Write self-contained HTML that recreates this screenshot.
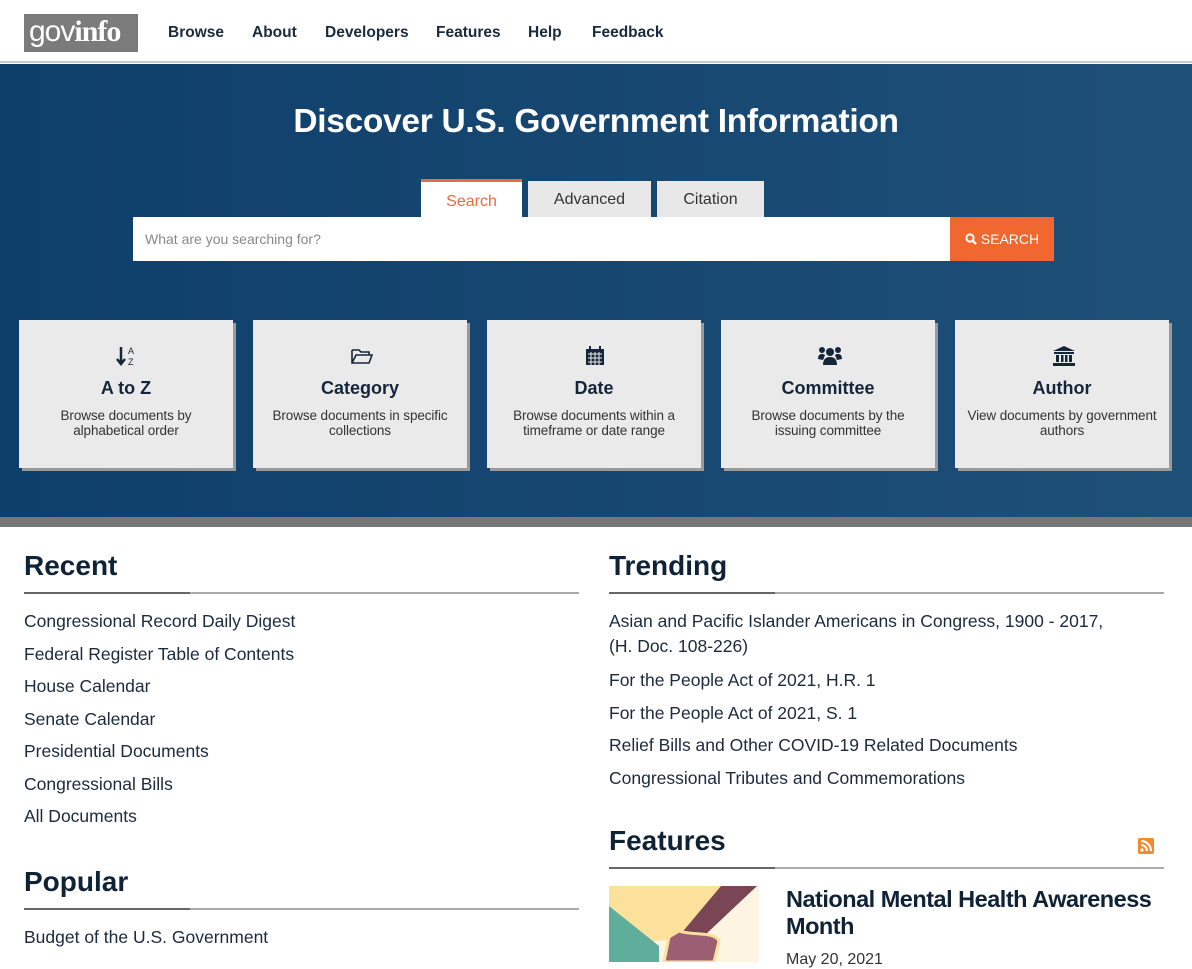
<!DOCTYPE html>
<html><head><meta charset="utf-8"><style>
*{box-sizing:border-box;margin:0;padding:0}
body{width:1192px;height:962px;overflow:hidden;font-family:"Liberation Sans",sans-serif;background:#fff;color:#1b2a3c}
.nav{height:63px;border-bottom:2px solid #c5ccd3;position:relative}
.logo{position:absolute;left:24px;top:14px;width:114px;height:38px;background:#7b7b7b;color:#fff;font-size:30px;line-height:36px;padding-left:5px;letter-spacing:-1px}
.logo b{font-family:"Liberation Serif",serif;font-weight:bold}
.nav a{position:absolute;top:24px;font-size:15.5px;font-weight:bold;color:#1b2a3c}
.hero{position:absolute;top:64px;left:0;width:1192px;height:453px;background:linear-gradient(90deg,#0e3e6a,#1f5078)}
.bar{position:absolute;top:517px;left:0;width:1192px;height:10px;background:#777}
h1{position:absolute;top:103px;width:100%;text-align:center;color:#fff;font-size:33.5px;font-weight:bold;letter-spacing:-0.3px}
.tab{position:absolute;top:181px;height:36px;background:#e8e8e8;font-size:16px;text-align:center;line-height:38px;color:#333}
.tab.on{background:#fff;color:#e86b42;border-top:3px solid #e86b42;top:179px;height:38px;line-height:40px}
.inp{position:absolute;left:133px;top:217px;width:817px;height:44px;background:#fff;color:#888;font-size:14px;line-height:44px;padding-left:12px}
.btn{position:absolute;left:950px;top:217px;width:104px;height:44px;background:#f0682f;color:#fff;font-size:14px;line-height:44px;text-align:center}
.card{position:absolute;top:320px;width:214px;height:148px;background:#eaeaea;box-shadow:3px 3px 0 #9a9a9a;text-align:center;color:#1b2a3c}
.card svg{position:absolute;left:97px;top:25px}
.card h3{position:absolute;top:58px;width:100%;font-size:18px;font-weight:bold;color:#16263a}
.card p{position:absolute;top:88px;width:100%;font-size:13.5px;line-height:15px;color:#333;padding:0 8px;letter-spacing:-0.1px}
.sec{position:absolute;width:555px}
.sec h2{font-size:28px;font-weight:bold;color:#0f2236;height:44px;padding-top:2px}
.sec .ul{height:2px;background:#aaa;position:relative;margin-bottom:11px}
.sec .ul:before{content:"";position:absolute;left:0;top:0;width:166px;height:2px;background:#666}
.sec a{display:block;font-size:17.5px;line-height:32.5px;color:#1b2a3c}
</style></head><body>
<div class="nav">
<div class="logo">gov<b>info</b></div>
<a style="left:168px">Browse</a><a style="left:252px">About</a><a style="left:325px">Developers</a><a style="left:436px">Features</a><a style="left:528px">Help</a><a style="left:592px">Feedback</a>
</div>
<div class="hero"></div>
<h1>Discover U.S. Government Information</h1>
<div class="tab on" style="left:421px;width:101px">Search</div>
<div class="tab" style="left:528px;width:123px">Advanced</div>
<div class="tab" style="left:657px;width:107px">Citation</div>
<div class="inp">What are you searching for?</div>
<div class="btn"><svg width="12" height="12" viewBox="0 0 12 12" style="vertical-align:-1px"><circle cx="5" cy="5" r="3.6" stroke="#fff" stroke-width="2" fill="none"/><path d="M7.5 7.5L11 11" stroke="#fff" stroke-width="2.4"/></svg> SEARCH</div>

<div class="card" style="left:19px"><svg width="22" height="22" viewBox="0 0 22 22"><path d="M5 2v16M1 14l4 5 4-5" stroke="#16263a" stroke-width="2.5" fill="none"/><text x="12" y="9" font-size="9" fill="#16263a" font-family="Liberation Sans">A</text><text x="12" y="20" font-size="9" fill="#16263a" font-family="Liberation Sans">Z</text></svg><h3>A to Z</h3><p>Browse documents by<br>alphabetical order</p></div>
<div class="card" style="left:253px"><svg width="24" height="22" viewBox="0 0 24 22"><path d="M2 5h7l2 2h8v3M2 5v13h17l3-8H6L2 18" stroke="#16263a" stroke-width="1.6" fill="none"/></svg><h3>Category</h3><p>Browse documents in specific<br>collections</p></div>
<div class="card" style="left:487px"><svg width="22" height="22" viewBox="0 0 22 22"><rect x="2" y="4" width="18" height="16" fill="#16263a"/><path d="M4 9h14M4 13h14M4 17h14M7 7v13M11 7v13M15 7v13" stroke="#eaeaea" stroke-width="1"/><rect x="5" y="1" width="2" height="5" fill="#16263a"/><rect x="15" y="1" width="2" height="5" fill="#16263a"/></svg><h3>Date</h3><p>Browse documents within a<br>timeframe or date range</p></div>
<div class="card" style="left:721px"><svg width="24" height="22" viewBox="0 0 24 22"><circle cx="12" cy="7" r="4" fill="#16263a"/><circle cx="4" cy="5" r="3" fill="#16263a"/><circle cx="20" cy="5" r="3" fill="#16263a"/><path d="M5 20c0-6 3-8 7-8s7 2 7 8z" fill="#16263a"/><path d="M0 14c0-4 2-5 4-5s3 1 3 1l-2 5z M24 14c0-4-2-5-4-5s-3 1-3 1l2 5z" fill="#16263a"/></svg><h3>Committee</h3><p>Browse documents by the<br>issuing committee</p></div>
<div class="card" style="left:955px"><svg width="24" height="22" viewBox="0 0 24 22"><path d="M12 1L1 6h22z" fill="#16263a"/><rect x="2" y="7" width="20" height="2" fill="#16263a"/><rect x="4" y="10" width="3" height="7" fill="#16263a"/><rect x="9" y="10" width="2.5" height="7" fill="#16263a"/><rect x="13" y="10" width="2.5" height="7" fill="#16263a"/><rect x="17" y="10" width="3" height="7" fill="#16263a"/><rect x="1" y="18" width="22" height="3" fill="#16263a"/></svg><h3>Author</h3><p>View documents by government<br>authors</p></div>
<div class="bar"></div>

<div class="sec" style="left:24px;top:548px"><h2>Recent</h2><div class="ul"></div>
<a>Congressional Record Daily Digest</a><a>Federal Register Table of Contents</a><a>House Calendar</a><a>Senate Calendar</a><a>Presidential Documents</a><a>Congressional Bills</a><a>All Documents</a></div>
<div class="sec" style="left:24px;top:864px"><h2>Popular</h2><div class="ul"></div><a>Budget of the U.S. Government</a></div>
<div class="sec" style="left:609px;top:548px"><h2>Trending</h2><div class="ul"></div>
<a style="line-height:25px;margin-bottom:5px;padding-top:4px">Asian and Pacific Islander Americans in Congress, 1900 - 2017,<br>(H. Doc. 108-226)</a><a>For the People Act of 2021, H.R. 1</a><a>For the People Act of 2021, S. 1</a><a>Relief Bills and Other COVID-19 Related Documents</a><a>Congressional Tributes and Commemorations</a></div>
<div class="sec" style="left:609px;top:823px"><h2>Features</h2><div class="ul"></div></div>
<svg style="position:absolute;left:1138px;top:838px" width="16" height="16" viewBox="0 0 16 16"><rect width="16" height="16" rx="2" fill="#f08a2c"/><circle cx="4" cy="12" r="1.6" fill="#fff"/><path d="M3 7a6 6 0 016 6M3 3a10 10 0 0110 10" stroke="#fff" stroke-width="2" fill="none"/></svg>
<svg style="position:absolute;left:609px;top:886px" width="150" height="76" viewBox="0 0 150 76"><rect width="150" height="76" fill="#fdf5e2"/><path d="M0 0h135L95 50 0 60z" fill="#fbe19b"/><path d="M0 20l50 40v16H0z" fill="#5fae9c"/><path d="M112 0h36L95 50H70z" fill="#7a4656"/><path d="M70 45c15 5 35 0 40 10l-5 21H55l5-25z" fill="#9a5f72" stroke="#fbe19b" stroke-width="3"/></svg>
<div style="position:absolute;left:786px;top:886px;font-size:23.5px;font-weight:bold;color:#0f2236;line-height:27px;width:400px;letter-spacing:-0.5px">National Mental Health Awareness<br>Month</div>
<div style="position:absolute;left:786px;top:951px;font-size:16px;color:#333">May 20, 2021</div>
</body></html>
